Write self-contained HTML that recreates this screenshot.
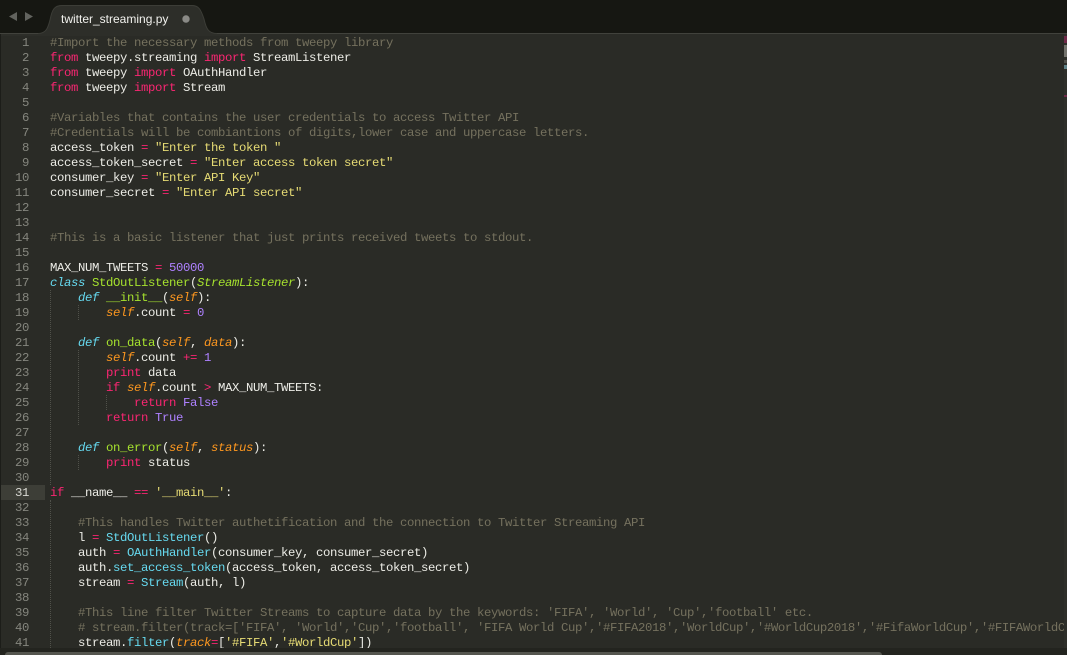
<!DOCTYPE html>
<html><head><meta charset="utf-8"><style>
html,body{margin:0;padding:0;background:#272822}
#w{position:relative;width:1067px;height:655px;overflow:hidden;background:#2a2b26}
#top{position:absolute;left:0;top:0;width:1067px;height:33px;background:#161712}
#ln{position:absolute;left:0;top:36px;width:29px;text-align:right;font:12.3px/15px "Liberation Mono",monospace;letter-spacing:-.4px;color:#85867e;white-space:pre}
#code{position:absolute;left:50px;top:36px;width:1014px;height:612px;overflow:hidden;font:12.3px/15px "Liberation Mono",monospace;letter-spacing:-.38px;color:#ececE6;white-space:pre}
.c{color:#75715e}.k{color:#f92672}.s{color:#e6db74}.n{color:#ae81ff}.d{color:#66d9ef;font-style:italic}.f{color:#a6e22e}.a{color:#fd971f;font-style:italic}.b{color:#66d9ef}.i{color:#a6e22e;font-style:italic}
.g{position:absolute;width:0;border-left:1px dotted #50514a}
.m{position:absolute;left:1064px;width:3px}
</style></head><body><div id="w">
<div id="top"></div>
<svg style="position:absolute;left:0;top:0" width="240" height="36">
<path d="M0 33H38C46 33 48 28 50 20C52 10 54 5 62 5H192C199 5 201 10 204 19C206 28 208 33 217 33H240V36H0Z" fill="#2d2e29"/>
<path d="M38 33.5C46 33.5 48 28 50 20C52 10 54 5.5 62 5.5H192C199 5.5 201 10 204 19C206 28 208 33.5 217 33.5" fill="none" stroke="#3c3d37"/>
<path d="M9 16.5L17 12V21Z" fill="#62635e"/>
<path d="M25 12L33 16.5L25 21Z" fill="#62635e"/>
<circle cx="186" cy="19" r="3.7" fill="#8a8a86"/>
</svg>
<div style="position:absolute;left:61px;top:12px;font:12px/15px 'Liberation Sans',sans-serif;color:#f2f2ee">twitter_streaming.py</div>
<div style="position:absolute;left:217px;top:33px;width:850px;height:1px;background:#41423c"></div>
<div style="position:absolute;left:0;top:33px;width:38px;height:1px;background:#41423c"></div>
<div style="position:absolute;left:0;top:34px;width:1px;height:621px;background:#1c1d19"></div>
<div style="position:absolute;left:1px;top:485px;width:44px;height:15px;background:#3d3e37"></div>
<div class="g" style="left:50px;top:290px;height:195px"></div>
<div class="g" style="left:50px;top:500px;height:148px"></div>
<div class="g" style="left:78px;top:305px;height:15px"></div>
<div class="g" style="left:78px;top:350px;height:75px"></div>
<div class="g" style="left:78px;top:455px;height:15px"></div>
<div class="g" style="left:106px;top:395px;height:15px"></div>
<div id="ln">1
2
3
4
5
6
7
8
9
10
11
12
13
14
15
16
17
18
19
20
21
22
23
24
25
26
27
28
29
30
<span style="color:#d8d8d2">31</span>
32
33
34
35
36
37
38
39
40
41</div>
<div id="code"><span class="c">#Import the necessary methods from tweepy library</span>
<span class="k">from</span> tweepy.streaming <span class="k">import</span> StreamListener
<span class="k">from</span> tweepy <span class="k">import</span> OAuthHandler
<span class="k">from</span> tweepy <span class="k">import</span> Stream

<span class="c">#Variables that contains the user credentials to access Twitter API</span>
<span class="c">#Credentials will be combiantions of digits,lower case and uppercase letters.</span>
access_token <span class="k">=</span> <span class="s">"Enter the token "</span>
access_token_secret <span class="k">=</span> <span class="s">"Enter access token secret"</span>
consumer_key <span class="k">=</span> <span class="s">"Enter API Key"</span>
consumer_secret <span class="k">=</span> <span class="s">"Enter API secret"</span>


<span class="c">#This is a basic listener that just prints received tweets to stdout.</span>

MAX_NUM_TWEETS <span class="k">=</span> <span class="n">50000</span>
<span class="d">class</span> <span class="f">StdOutListener</span>(<span class="i">StreamListener</span>):
    <span class="d">def</span> <span class="f">__init__</span>(<span class="a">self</span>):
        <span class="a">self</span>.count <span class="k">=</span> <span class="n">0</span>

    <span class="d">def</span> <span class="f">on_data</span>(<span class="a">self</span>, <span class="a">data</span>):
        <span class="a">self</span>.count <span class="k">+=</span> <span class="n">1</span>
        <span class="k">print</span> data
        <span class="k">if</span> <span class="a">self</span>.count <span class="k">&gt;</span> MAX_NUM_TWEETS:
            <span class="k">return</span> <span class="n">False</span>
        <span class="k">return</span> <span class="n">True</span>

    <span class="d">def</span> <span class="f">on_error</span>(<span class="a">self</span>, <span class="a">status</span>):
        <span class="k">print</span> status

<span class="k">if</span> __name__ <span class="k">==</span> <span class="s">'__main__'</span>:

    <span class="c">#This handles Twitter authetification and the connection to Twitter Streaming API</span>
    l <span class="k">=</span> <span class="b">StdOutListener</span>()
    auth <span class="k">=</span> <span class="b">OAuthHandler</span>(consumer_key, consumer_secret)
    auth.<span class="b">set_access_token</span>(access_token, access_token_secret)
    stream <span class="k">=</span> <span class="b">Stream</span>(auth, l)

    <span class="c">#This line filter Twitter Streams to capture data by the keywords: 'FIFA', 'World', 'Cup','football' etc.</span>
    <span class="c"># stream.filter(track=['FIFA', 'World','Cup','football', 'FIFA World Cup','#FIFA2018','WorldCup','#WorldCup2018','#FifaWorldCup','#FIFAWorldCup'])</span>
    stream.<span class="b">filter</span>(<span class="a">track</span><span class="k">=</span>[<span class="s">'#FIFA'</span>,<span class="s">'#WorldCup'</span>])</div>
<div class="m" style="top:34px;height:614px;background:#2e2f2a"></div>
<div class="m" style="top:36px;height:7px;background:#6e2a48"></div>
<div class="m" style="top:45px;height:12px;background:#72726c"></div>
<div class="m" style="top:60px;height:3px;background:#50504a"></div>
<div class="m" style="top:65px;height:4px;background:#5f8288"></div>
<div class="m" style="top:95px;height:2px;background:#6e2a48"></div>
<div style="position:absolute;left:0;top:648px;width:1067px;height:7px;background:#23241f"></div>
<div style="position:absolute;left:5px;top:652px;width:877px;height:3px;background:#55564f;border-radius:3px 3px 0 0"></div>
</div></body></html>
